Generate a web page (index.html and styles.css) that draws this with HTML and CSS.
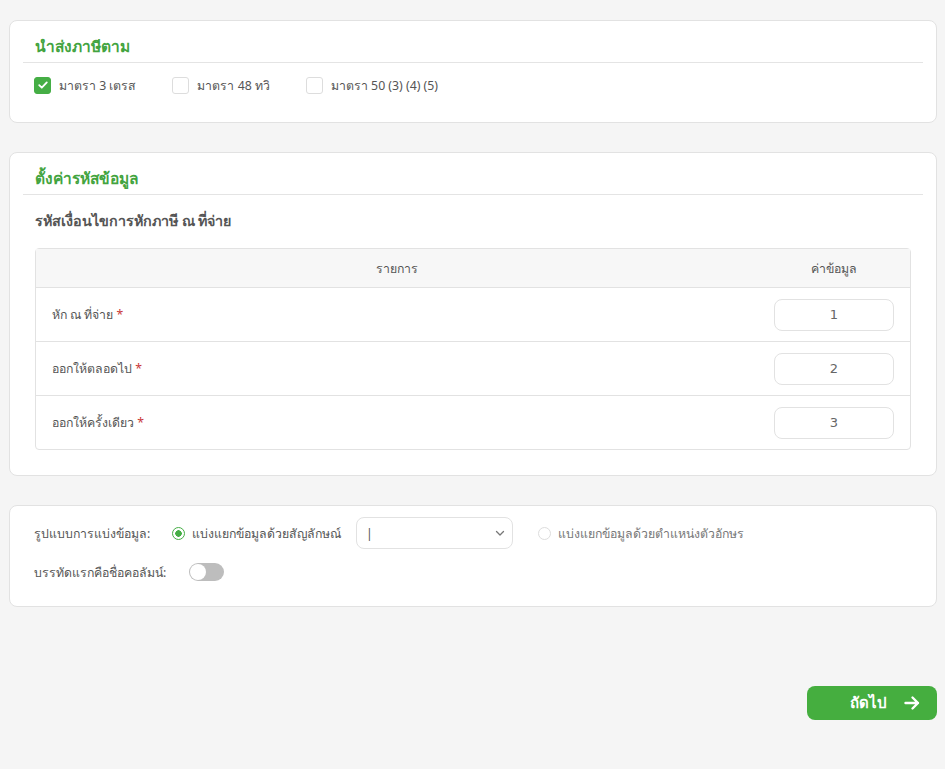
FILE: index.html
```html
<!DOCTYPE html>
<html lang="th">
<head>
  <meta charset="UTF-8">
  <title>ตั้งค่าการนำเข้าข้อมูล</title>
  <link rel="stylesheet" href="styles.css">
</head>
<body>

  <div class="card">
    <h2 class="card-title">นำส่งภาษีตาม</h2>
    <div class="check-row">
      <label class="check-item">
        <span class="box checked">
          <svg width="12" height="12" viewBox="0 0 12 12"><path d="M2.2 6.2 L4.8 8.7 L9.8 3.4" fill="none" stroke="#fff" stroke-width="1.8" stroke-linecap="round" stroke-linejoin="round"/></svg>
        </span>
        มาตรา 3 เตรส
      </label>
      <label class="check-item">
        <span class="box"></span>
        มาตรา 48 ทวิ
      </label>
      <label class="check-item">
        <span class="box"></span>
        มาตรา 50 (3) (4) (5)
      </label>
    </div>
  </div>

  <div class="card card-codes">
    <h2 class="card-title">ตั้งค่ารหัสข้อมูล</h2>
    <h3 class="sub-title">รหัสเงื่อนไขการหักภาษี ณ ที่จ่าย</h3>
    <table class="code-table">
      <thead>
        <tr>
          <th>รายการ</th>
          <th class="col-value">ค่าข้อมูล</th>
        </tr>
      </thead>
      <tbody>
        <tr>
          <td>หัก ณ ที่จ่าย <span class="req">*</span></td>
          <td class="col-value"><input class="value-input" type="text" value="1"></td>
        </tr>
        <tr>
          <td>ออกให้ตลอดไป <span class="req">*</span></td>
          <td class="col-value"><input class="value-input" type="text" value="2"></td>
        </tr>
        <tr>
          <td>ออกให้ครั้งเดียว <span class="req">*</span></td>
          <td class="col-value"><input class="value-input" type="text" value="3"></td>
        </tr>
      </tbody>
    </table>
  </div>

  <div class="card card-options">
    <div class="opt-row">
      <span class="opt-label">รูปแบบการแบ่งข้อมูล:</span>
      <label class="radio-item">
        <span class="radio on"></span>
        แบ่งแยกข้อมูลด้วยสัญลักษณ์
      </label>
      <div class="select-box">
        <span>|</span>
        <svg width="12" height="12" viewBox="0 0 12 12"><path d="M2.5 4.5 L6 8 L9.5 4.5" fill="none" stroke="#777" stroke-width="1.3" stroke-linecap="round" stroke-linejoin="round"/></svg>
      </div>
      <label class="radio-item off">
        <span class="radio"></span>
        แบ่งแยกข้อมูลด้วยตำแหน่งตัวอักษร
      </label>
    </div>
    <div class="opt-row second">
      <span class="opt-label">บรรทัดแรกคือชื่อคอลัมน์:</span>
      <span class="toggle"><span class="knob"></span></span>
    </div>
  </div>

  <div class="actions">
    <button class="next-btn">
      ถัดไป
      <svg width="18" height="18" viewBox="0 0 18 18"><path d="M2.5 9 H15 M9.5 3.5 L15 9 L9.5 14.5" fill="none" stroke="#fff" stroke-width="2.4" stroke-linecap="round" stroke-linejoin="round"/></svg>
    </button>
  </div>

</body>
</html>
```

FILE: styles.css
```css
body {
  margin: 0;
  padding: 20px 8px 0 9px;
  background: #f5f5f5;
  font-family: "Noto Sans", "DejaVu Sans", sans-serif;
  font-size: 12.3px;
  color: #555;
}

.card {
  background: #fff;
  border: 1px solid #e2e2e2;
  border-radius: 8px;
  padding: 13px 13px 27px;
  margin-bottom: 29px;
}

.card-title {
  margin: 0;
  padding: 0 12px 4px;
  font-size: 15.5px;
  line-height: 24px;
  font-weight: 600;
  color: #43a43f;
  border-bottom: 1px solid #e4e4e4;
}

.check-row {
  display: flex;
  gap: 36px;
  padding: 12px 11px 0;
  height: 20px;
  align-items: center;
}

.check-item {
  display: flex;
  align-items: center;
  gap: 8px;
}

.box {
  width: 15px;
  height: 15px;
  border: 1px solid #ddd;
  border-radius: 3px;
  display: flex;
  align-items: center;
  justify-content: center;
}

.box.checked {
  background: #45ae45;
  border-color: #45ae45;
}

.sub-title {
  margin: 14px 12px 15px;
  font-size: 14.3px;
  line-height: 24px;
  font-weight: 600;
  color: #555;
}

.card-codes {
  padding-bottom: 25px;
}

.code-table {
  width: calc(100% - 24px);
  margin: 0 12px;
  border-collapse: separate;
  border-spacing: 0;
  border: 1px solid #e2e2e2;
  border-radius: 4px;
}

.code-table th {
  background: #f7f7f7;
  height: 38px;
  padding: 0;
  font-weight: normal;
  font-size: 12.3px;
  color: #555;
  border-bottom: 1px solid #e2e2e2;
}

.code-table td {
  height: 53px;
  padding: 0 16px;
  border-bottom: 1px solid #e2e2e2;
}

.code-table tr:last-child td {
  border-bottom: none;
}

.code-table .col-value {
  width: 120px;
  text-align: center;
}

.req {
  color: #c93838;
}

.value-input {
  width: 120px;
  height: 32px;
  box-sizing: border-box;
  border: 1px solid #e2e2e2;
  border-radius: 8px;
  text-align: center;
  font-family: "DejaVu Sans", sans-serif;
  font-size: 13px;
  color: #666;
}

.card-options {
  padding: 11px 24px 25px;
}

.opt-row {
  display: flex;
  align-items: center;
  height: 32px;
}

.opt-row.second {
  margin-top: 14px;
  height: 18px;
}

.opt-label {
  width: 138px;
}

.opt-row.second .opt-label {
  width: 155px;
}

.radio-item {
  display: flex;
  align-items: center;
  gap: 7px;
}

.radio-item.off {
  color: #777;
  margin-left: 25px;
}

.radio {
  width: 11px;
  height: 11px;
  border: 1px solid #ddd;
  border-radius: 50%;
  box-sizing: content-box;
}

.radio.on {
  border-color: #45ae45;
  background: radial-gradient(circle, #45ae45 0 3px, #fff 3.5px);
}

.select-box {
  margin-left: 15px;
  width: 157px;
  height: 32px;
  box-sizing: border-box;
  border: 1px solid #e2e2e2;
  border-radius: 8px;
  display: flex;
  align-items: center;
  justify-content: space-between;
  padding: 0 6px 0 9px;
}

.toggle {
  position: relative;
  width: 35px;
  height: 18px;
  border-radius: 9px;
  background: #bdbdbd;
}

.knob {
  position: absolute;
  top: 1px;
  left: 1px;
  width: 16px;
  height: 16px;
  border-radius: 50%;
  background: #fff;
}

.actions {
  display: flex;
  justify-content: flex-end;
  margin-top: 79px;
}

.next-btn {
  width: 130px;
  height: 34px;
  border: none;
  border-radius: 8px;
  background: #45ae3f;
  color: #fff;
  font-family: "Noto Sans", sans-serif;
  font-size: 15px;
  font-weight: 600;
  display: flex;
  align-items: center;
  justify-content: flex-end;
  gap: 16px;
  padding: 0 16px 0 0;
}
```
